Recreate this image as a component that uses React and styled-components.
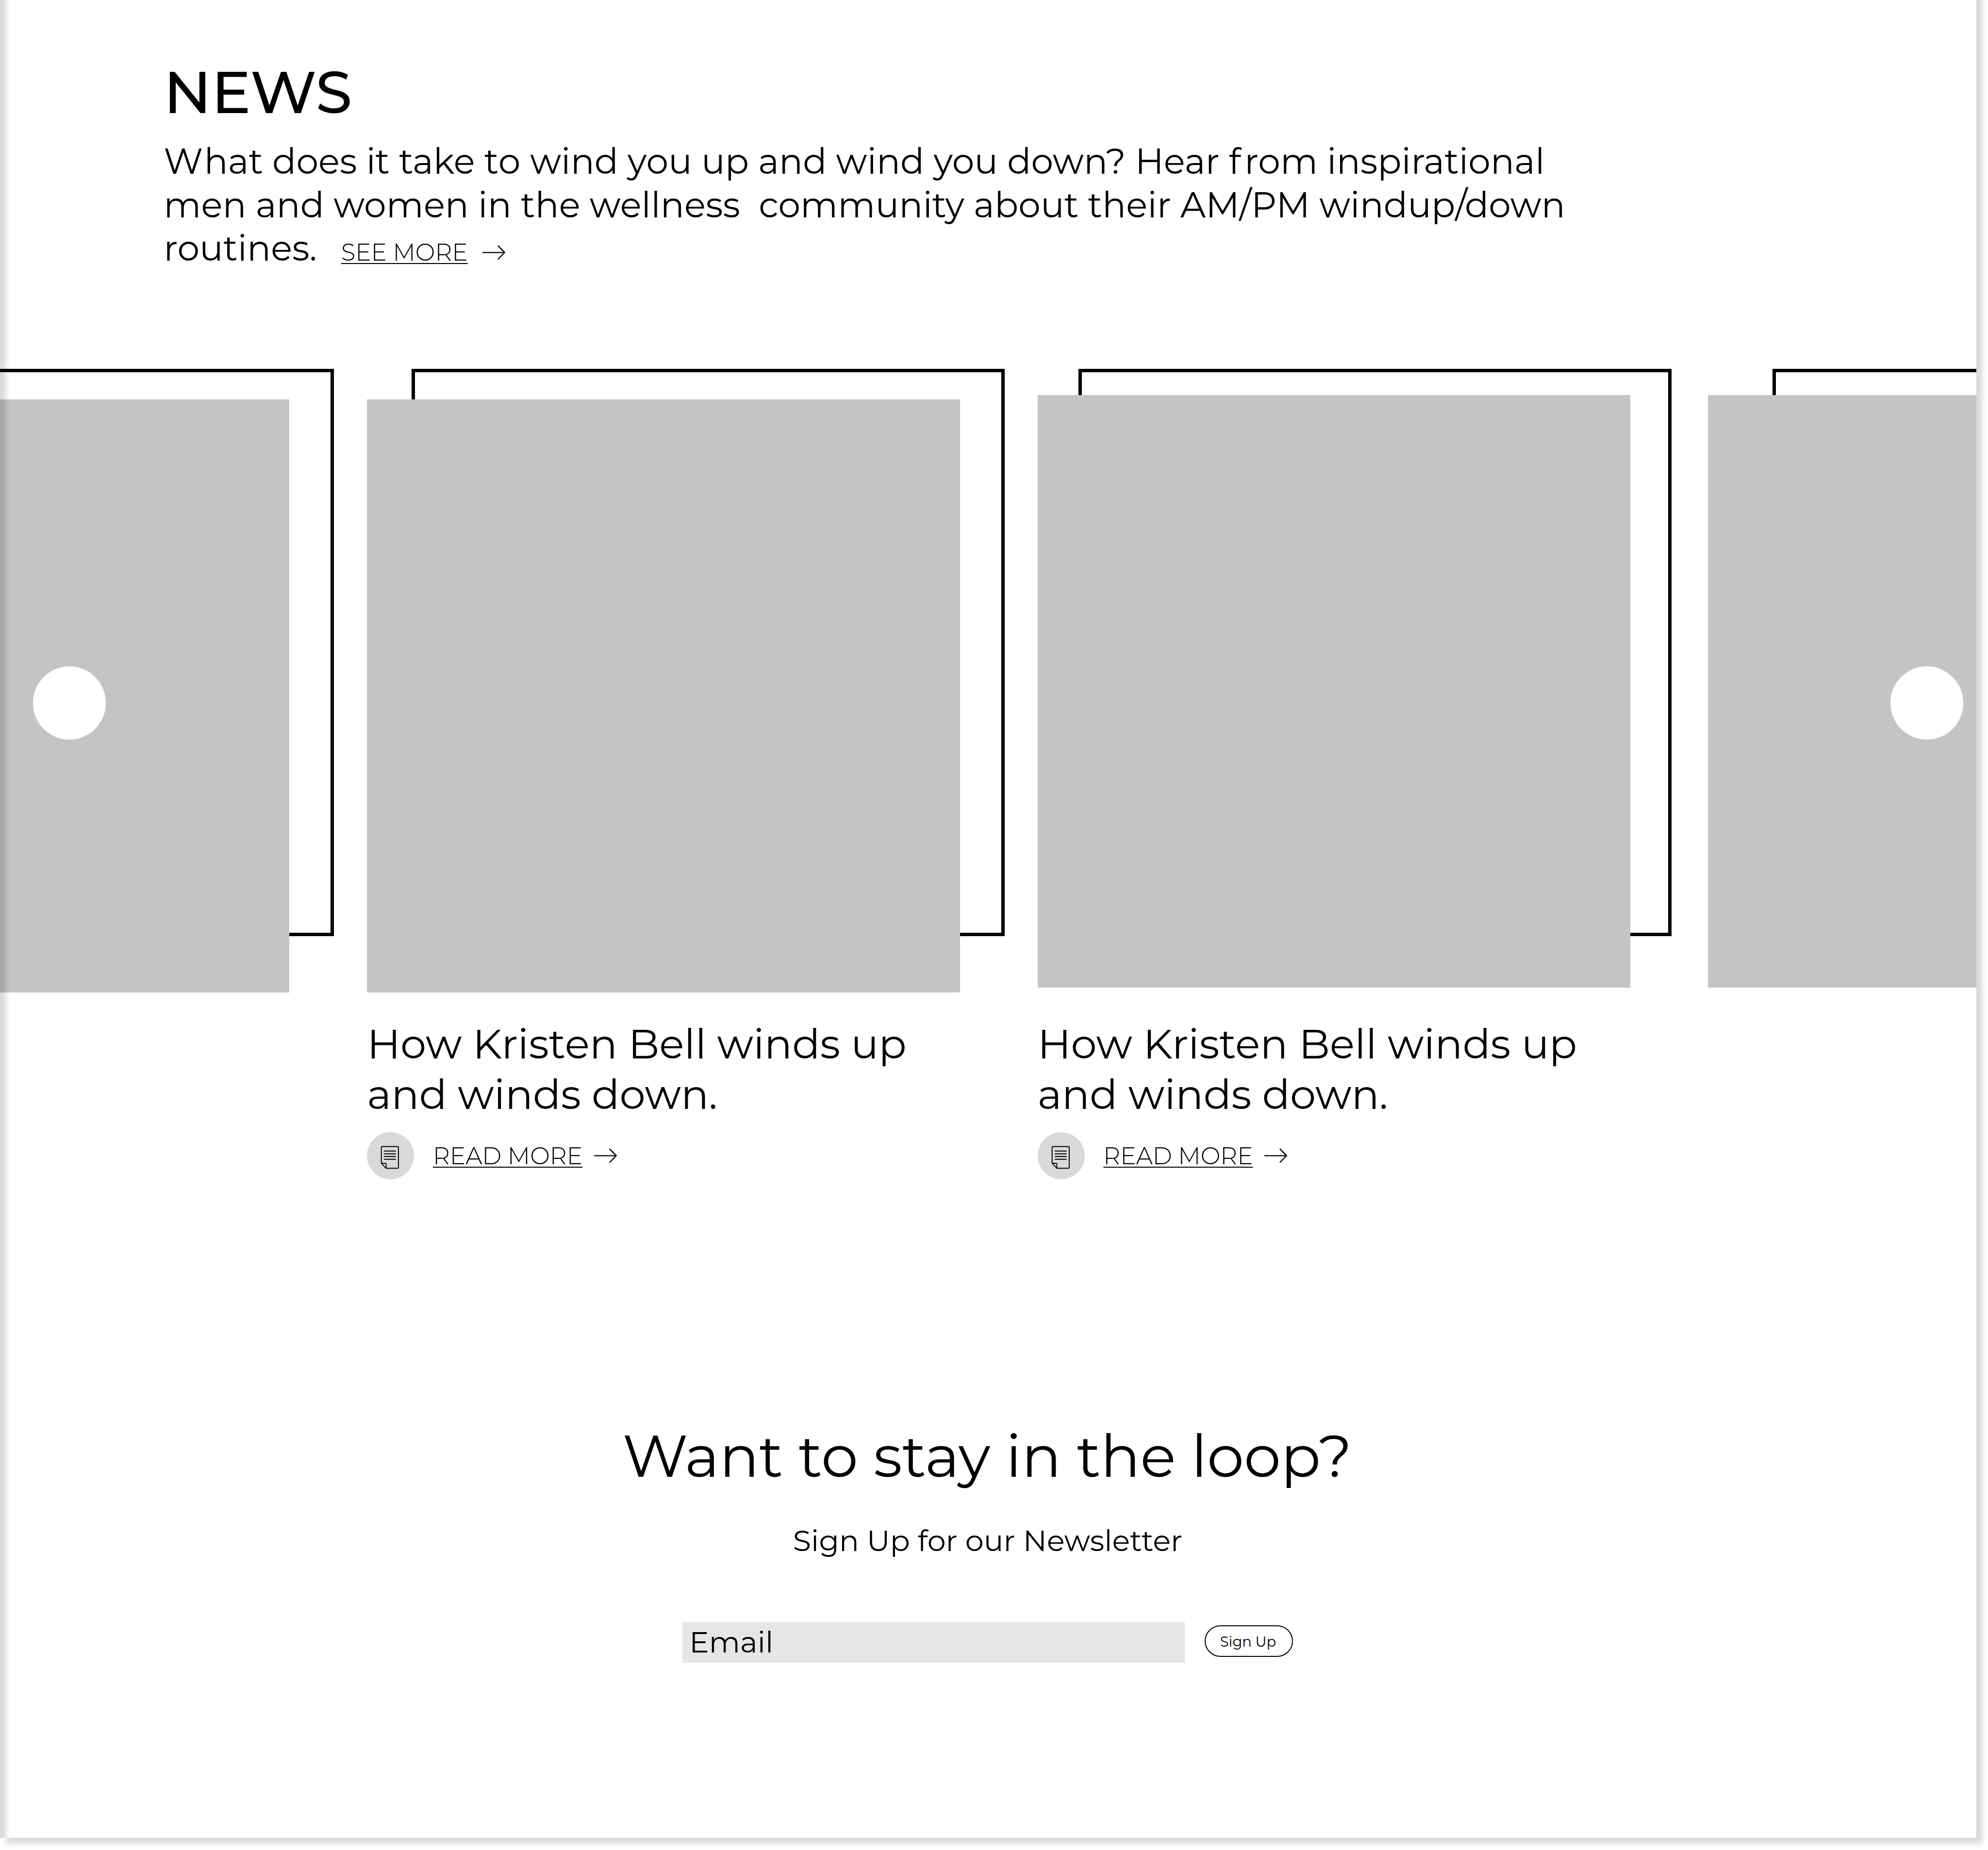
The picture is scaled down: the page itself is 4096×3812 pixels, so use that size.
import React from "react";
import styled, { createGlobalStyle } from "styled-components";

const u = (n) => `${(n * 4096) / 5070}px`;

const GlobalStyle = createGlobalStyle`
  *, *::before, *::after { box-sizing: border-box; }
  html, body { margin: 0; background: #fff; }
  body { font-family: Montserrat, Inter, sans-serif; color: #000; }
`;

const Board = styled.div`
  width: 4096px;
  height: 3812px;
  overflow: hidden;
  background: #fff;
`;

const Page = styled.main`
  position: relative;
  width: ${u(5040)};
  height: ${u(4728)};
  margin-top: ${u(-40)};
  padding-top: ${u(40)};
  overflow: hidden;
  background: #fff;
  box-shadow: ${u(15)} ${u(15)} ${u(13)} rgba(0, 0, 0, 0.15);

  &::after {
    content: "";
    position: absolute;
    inset: 0;
    pointer-events: none;
    box-shadow: inset ${u(15)} ${u(15)} ${u(13)} rgba(0, 0, 0, 0.15);
  }
`;

const NewsHeader = styled.header`
  height: ${u(941)};
  padding: ${u(143)} 0 0 ${u(417.5)};
`;

const NewsTitle = styled.h1`
  margin: 0 0 ${u(30.5)};
  font-size: ${u(150)};
  line-height: ${u(183)};
  font-weight: 500;
`;

const Intro = styled.div`
  font-size: ${u(90)};
  line-height: ${u(111)};
`;

const IntroLine = styled.div`
  display: ${(p) => (p.$row ? "flex" : "block")};
  align-items: baseline;
  height: ${u(111)};
  white-space: pre;
`;

const Loose = styled.span`
  letter-spacing: ${(p) => u(p.$by)};
`;

const MoreLink = styled.a`
  display: flex;
  align-items: center;
  gap: ${(p) => u(p.$gap)};
  margin-left: ${(p) => u(p.$offset)};
  font-size: ${u(60)};
  line-height: ${u(73)};
  font-weight: 300;
  white-space: nowrap;
`;

const MoreLabel = styled.span`
  padding-top: ${u(1.5)};
  text-decoration: underline;
  text-decoration-thickness: ${u(3)};
  text-underline-offset: ${u(6)};
`;

const ArrowIcon = styled.svg`
  display: block;
  width: ${u(60)};
  height: ${u(38)};
  fill: none;
  stroke: #000;
  stroke-width: 3;
`;

const Carousel = styled.section`
  position: relative;
  height: ${u(2681)};
`;

const Track = styled.div`
  display: flex;
  gap: ${u(198)};
  margin-left: ${u(-774)};
`;

const Card = styled.article`
  flex: 0 0 ${u(1512)};
`;

const Media = styled.div`
  position: relative;
  height: ${u(1590)};
  padding-top: ${(p) => u(p.$drop)};
`;

const Frame = styled.div`
  position: absolute;
  top: 0;
  left: ${(p) => u(p.$shift)};
  width: ${u(1512)};
  height: ${u(1446.5)};
  border: ${u(9)} solid #000;
`;

const Picture = styled.div`
  position: relative;
  height: ${u(1512)};
  background: #c4c4c4;
`;

const CardTitle = styled.h2`
  margin: ${u(66.7)} 0 ${u(32.4)};
  font-size: ${u(105)};
  line-height: ${u(129)};
  font-weight: 400;
`;

const CardActions = styled.div`
  display: flex;
  align-items: center;
`;

const Badge = styled.span`
  display: grid;
  place-items: center;
  width: ${u(120)};
  height: ${u(120)};
  border-radius: 50%;
  background: #d9d9d9;
`;

const NoteIcon = styled.svg`
  width: ${u(120)};
  height: ${u(120)};
  fill: none;
  stroke: #000;
  stroke-width: 2.4;
  stroke-linecap: round;
  stroke-linejoin: round;
`;

const SlideButton = styled.button`
  position: absolute;
  top: ${u(759)};
  ${(p) => p.$side}: ${(p) => u(p.$inset)};
  width: ${u(186)};
  height: ${u(186)};
  padding: 0;
  border: 0;
  border-radius: 50%;
  background: #fff;
`;

const Newsletter = styled.section`
  display: flex;
  flex-direction: column;
  align-items: center;
`;

const LoopTitle = styled.h2`
  margin: 0 ${u(4)} ${u(79.4)} 0;
  font-size: ${u(150)};
  line-height: ${u(183)};
  font-weight: 400;
`;

const LoopText = styled.p`
  margin: 0 ${u(2)} ${u(160.8)} 0;
  font-size: ${u(75)};
  line-height: ${u(91)};
`;

const Form = styled.form`
  display: flex;
  align-items: flex-start;
  gap: ${u(51)};
  margin-right: ${u(2)};
`;

const EmailInput = styled.input`
  width: ${u(1281)};
  height: ${u(105)};
  padding: 0 ${u(17.5)} ${u(3)};
  border: 0;
  border-radius: 0;
  background: #e6e6e6;
  font: 400 ${u(75)} Montserrat, Inter, sans-serif;

  &::placeholder {
    color: #000;
    opacity: 1;
  }
`;

const SubmitButton = styled.button`
  width: ${u(225)};
  height: ${u(81)};
  margin-top: ${u(9)};
  padding: ${u(1.5)} ${u(4)} 0 0;
  border: 2.5px solid #000;
  border-radius: ${u(40.5)};
  background: #fff;
  color: #000;
  font: 400 ${u(36)} Montserrat, Inter, sans-serif;
`;

const Arrow = () => (
  <ArrowIcon viewBox="0 0 60 38">
    <path d="M0 19H56.5M39.5 1.5L56.5 19L39.5 36.5" />
  </ArrowIcon>
);

const Note = () => (
  <NoteIcon viewBox="0 0 120 120">
    <path d="M36.8 79.3V38.8Q36.8 36.6 39 36.6H78.2Q80.4 36.6 80.4 38.8V89.8Q80.4 92 78.2 92H49L36.8 79.3H46.8Q49 79.3 49 81.5V92" />
    <path d="M44.5 48H73M44.5 55H73M44.5 62H73M44.5 69H73" />
  </NoteIcon>
);

const cards = [
  { id: 1, drop: 78, shift: 114 },
  { id: 2, drop: 78, shift: 114, title: "How Kristen Bell winds up and winds down." },
  { id: 3, drop: 66, shift: 105, title: "How Kristen Bell winds up and winds down." },
  { id: 4, drop: 66, shift: 165 },
];

const NewsCard = ({ drop, shift, title }) => (
  <Card>
    <Media $drop={drop}>
      <Frame $shift={shift} />
      <Picture />
    </Media>
    {title && (
      <>
        <CardTitle>{title}</CardTitle>
        <CardActions>
          <Badge>
            <Note />
          </Badge>
          <MoreLink $gap={29.5} $offset={48}>
            <MoreLabel>READ MORE</MoreLabel>
            <Arrow />
          </MoreLink>
        </CardActions>
      </>
    )}
  </Card>
);

export default function App() {
  return (
    <Board>
      <GlobalStyle />
      <Page>
        <NewsHeader>
          <NewsTitle>NEWS</NewsTitle>
          <Intro>
            <IntroLine>
              <Loose $by={3}>W</Loose>hat does it take <Loose $by={1}>to</Loose> wind you up and wind you down? Hear{" "}
              <Loose $by={9.5}>f</Loose>rom inspirational
            </IntroLine>
            <IntroLine>
              <Loose $by={0.05}>{"men and women in the wellness  community about their AM/PM windup/down"}</Loose>
            </IntroLine>
            <IntroLine $row>
              routines.
              <MoreLink $gap={37} $offset={61.5}>
                <MoreLabel>SEE MORE</MoreLabel>
                <Arrow />
              </MoreLink>
            </IntroLine>
          </Intro>
        </NewsHeader>
        <Carousel>
          <Track>
            {cards.map((card) => (
              <NewsCard key={card.id} {...card} />
            ))}
          </Track>
          <SlideButton $side="left" $inset={84} aria-label="Previous" />
          <SlideButton $side="right" $inset={33} aria-label="Next" />
        </Carousel>
        <Newsletter>
          <LoopTitle>Want to stay in the loop?</LoopTitle>
          <LoopText>Sign Up for our Newsletter</LoopText>
          <Form>
            <EmailInput placeholder="Email" />
            <SubmitButton type="button">Sign Up</SubmitButton>
          </Form>
        </Newsletter>
      </Page>
    </Board>
  );
}
